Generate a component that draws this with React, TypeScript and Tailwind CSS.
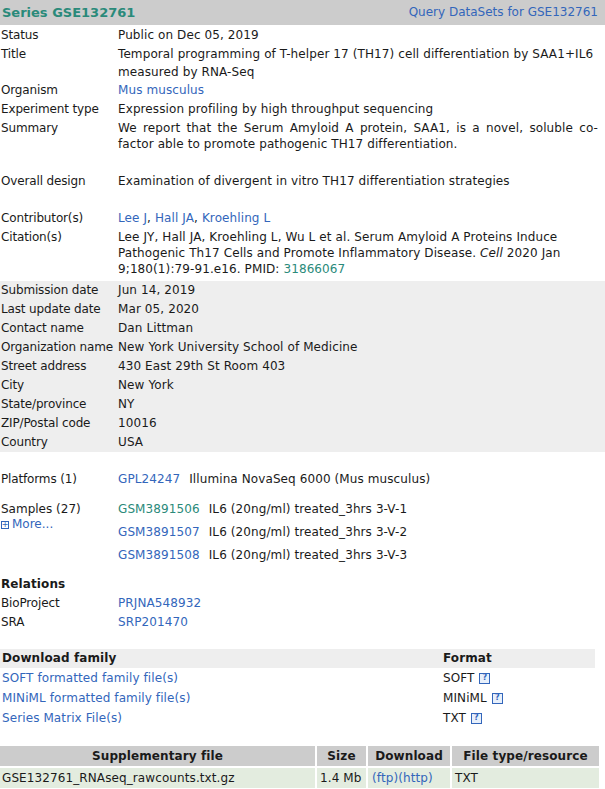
import React from 'react';

const teal = 'text-[#2a8a7a]';
const blue = 'text-[#3366bb]';

function Row({ label, children, className = '' }: { label: string; children: React.ReactNode; className?: string }) {
  return (
    <div className={`flex ${className}`}>
      <div className="w-[118px] shrink-0 pl-px tracking-[-0.15px]">{label}</div>
      <div className="flex-1 pr-[7px]">{children}</div>
    </div>
  );
}

function Help() {
  return (
    <span className="inline-flex items-center justify-center w-[11px] h-[11px] ml-[5px] border border-[#3366bb] bg-[#e8f0fb] text-[8px] leading-none text-[#3366bb] font-bold">
      ?
    </span>
  );
}

export default function App() {
  const contact = [
    ['Submission date', 'Jun 14, 2019'],
    ['Last update date', 'Mar 05, 2020'],
    ['Contact name', 'Dan Littman'],
    ['Organization name', 'New York University School of Medicine'],
    ['Street address', '430 East 29th St Room 403'],
    ['City', 'New York'],
    ['State/province', 'NY'],
    ['ZIP/Postal code', '10016'],
    ['Country', 'USA'],
  ];

  const samples = [
    { id: 'GSM3891506', name: 'IL6 (20ng/ml) treated_3hrs 3-V-1', visited: true },
    { id: 'GSM3891507', name: 'IL6 (20ng/ml) treated_3hrs 3-V-2', visited: false },
    { id: 'GSM3891508', name: 'IL6 (20ng/ml) treated_3hrs 3-V-3', visited: false },
  ];

  return (
    <div className="w-[605px] bg-white text-[12px] leading-[19px] tracking-[0.1px] text-[#1a1a1a] font-['DejaVu_Sans',sans-serif]">
      {/* Header bar */}
      <div className="flex items-center justify-between h-[25px] bg-[#cccccc] px-[2px]">
        <span className={`font-bold text-[13px] tracking-normal ${teal}`}>Series GSE132761</span>
        <span className={`${blue} pr-[5px] tracking-normal`}>Query DataSets for GSE132761</span>
      </div>

      <div className="pt-[1px]">
        <Row label="Status">Public on Dec 05, 2019</Row>
        <Row label="Title">
          <div className="leading-[18px]">Temporal programming of T-helper 17 (TH17) cell differentiation by SAA1+IL6 measured by RNA-Seq</div>
        </Row>
        <Row label="Organism"><span className={blue}>Mus musculus</span></Row>
        <Row label="Experiment type">Expression profiling by high throughput sequencing</Row>
        <Row label="Summary" className="pb-[20px]">
          <div className="text-justify leading-[16px] pt-[1px]">
            We report that the Serum Amyloid A protein, SAA1, is a novel, soluble co-factor able to promote pathogenic TH17 differentiation.
          </div>
        </Row>
        <Row label="Overall design" className="pb-[18px]">Examination of divergent in vitro TH17 differentiation strategies</Row>
        <Row label="Contributor(s)">
          <span className={blue}>Lee J</span>, <span className={blue}>Hall JA</span>, <span className={blue}>Kroehling L</span>
        </Row>
        <Row label="Citation(s)" className="pb-[4px]">
          <div className="leading-[16px] pt-[1px]">
            Lee JY, Hall JA, Kroehling L, Wu L et al. Serum Amyloid A Proteins Induce Pathogenic Th17 Cells and Promote Inflammatory Disease. <i>Cell</i> 2020 Jan 9;180(1):79-91.e16. PMID: <span className={teal}>31866067</span>
          </div>
        </Row>
      </div>

      {/* Contact block */}
      <div className="bg-[#eeeeee]">
        {contact.map(([l, v]) => (
          <Row key={l} label={l}>{v}</Row>
        ))}
      </div>

      <div className="pt-[18px]">
        <Row label="Platforms (1)">
          <span className={blue}>GPL24247</span>
          <span className="ml-[9px]">Illumina NovaSeq 6000 (Mus musculus)</span>
        </Row>
        <div className="flex pt-[11px]">
          <div className="w-[118px] shrink-0 pl-px pt-[2px] leading-[15px] tracking-normal">
            <div>Samples (27)</div>
            <div className="flex items-center">
              <span className="inline-flex items-center justify-center w-[8px] h-[8px] border border-[#3366bb] text-[8px] leading-none text-[#3366bb] mr-[3px]">+</span>
              <span className={blue}>More...</span>
            </div>
          </div>
          <div className="flex-1 flex flex-col gap-[4px]">
            {samples.map((s) => (
              <div key={s.id}>
                <span className={s.visited ? teal : blue}>{s.id}</span>
                <span className="ml-[9px]">{s.name}</span>
              </div>
            ))}
          </div>
        </div>

        <div className="font-bold pl-px pt-[10px]">Relations</div>
        <Row label="BioProject"><span className={blue}>PRJNA548932</span></Row>
        <Row label="SRA"><span className={blue}>SRP201470</span></Row>
      </div>

      {/* Download family */}
      <div className="pt-[17px] w-[595px]">
        <div className="flex bg-[#eeeeee] font-bold">
          <div className="w-[443px] pl-[2px]">Download family</div>
          <div className="flex-1">Format</div>
        </div>
        {[
          ['SOFT formatted family file(s)', 'SOFT'],
          ['MINiML formatted family file(s)', 'MINiML'],
          ['Series Matrix File(s)', 'TXT'],
        ].map(([a, b]) => (
          <div key={a} className="flex h-[20px] items-center">
            <div className={`w-[443px] pl-[2px] ${blue}`}>{a}</div>
            <div className="flex-1 flex items-center">{b}<Help /></div>
          </div>
        ))}
      </div>

      {/* Supplementary */}
      <div className="pt-[18px] pb-[3px]">
        <div className="grid grid-cols-[315px_49px_82px_147px] gap-[2px]">
          <div className="bg-[#cccccc] font-bold text-center h-[20px] leading-[20px]">Supplementary file</div>
          <div className="bg-[#cccccc] font-bold text-center leading-[20px]">Size</div>
          <div className="bg-[#cccccc] font-bold text-center leading-[20px]">Download</div>
          <div className="bg-[#cccccc] font-bold text-center leading-[20px]">File type/resource</div>
          <div className="bg-[#e3ecdf] pl-[2px] h-[20px] leading-[20px]">GSE132761_RNAseq_rawcounts.txt.gz</div>
          <div className="bg-[#e3ecdf] pl-[3px] leading-[20px]">1.4 Mb</div>
          <div className={`bg-[#e3ecdf] pl-[4px] leading-[20px] ${blue}`}>(ftp)(http)</div>
          <div className="bg-[#e3ecdf] pl-[3px] leading-[20px]">TXT</div>
        </div>
      </div>
    </div>
  );
}
